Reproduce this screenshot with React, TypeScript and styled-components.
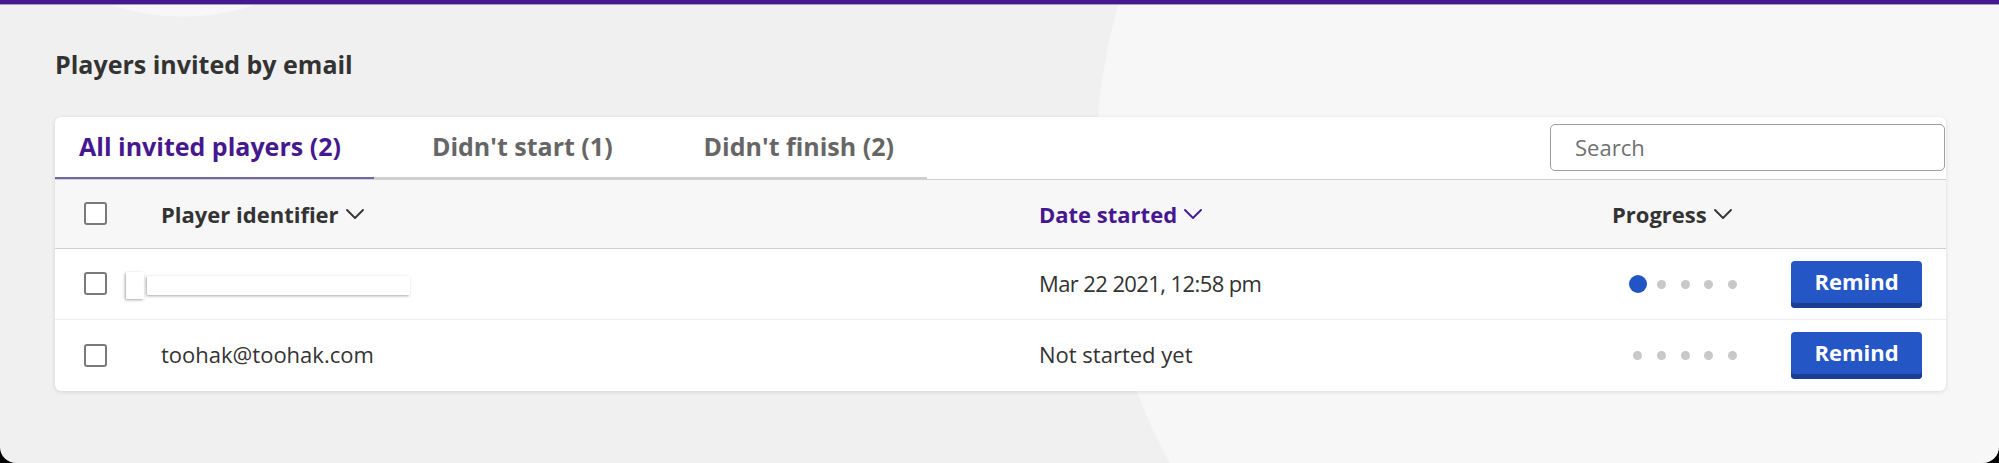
import React from "react";
import styled, { createGlobalStyle } from "styled-components";

const GlobalStyle = createGlobalStyle`
  html, body { margin: 0; padding: 0; background: #000; }
  body { font-family: "Open Sans", "Noto Sans", sans-serif; }
  *, *::before, *::after { box-sizing: border-box; }
`;

const Page = styled.div`
  width: 1999px;
  height: 463px;
  overflow: hidden;
  border-radius: 0 0 16px 16px;
  background:
    radial-gradient(circle 227px at 183px -210px, #f7f7f7 99.6%, rgba(247, 247, 247, 0) 100%),
    radial-gradient(circle 615px at 1710px 170px, #f7f7f7 99.8%, rgba(247, 247, 247, 0) 100%),
    #f0f0f0;
  display: flex;
  flex-direction: column;
`;

const TopBar = styled.div`
  height: 5px;
  background: #46178f;
  border-bottom: 1px solid #a49bc8;
`;

const Content = styled.main`
  padding: 42px 53px 0 55px;
`;

const Heading = styled.h2`
  margin: 0;
  font-size: 25px;
  font-weight: 700;
  line-height: 34px;
  color: #333;
`;

const Card = styled.section`
  margin-top: 36px;
  background: #fff;
  border-radius: 6px;
  box-shadow: 0 1px 4px rgba(0, 0, 0, 0.12);
  overflow: hidden;
`;

const TabBar = styled.div`
  display: flex;
  align-items: flex-start;
  height: 62px;
`;

const Tab = styled.button<{ $active?: boolean; $first?: boolean }>`
  height: 62px;
  margin: 0;
  padding: 12px 33px 0 ${(p) => (p.$first ? "24px" : "58px")};
  border: none;
  border-bottom: 2px solid ${(p) => (p.$active ? "#6f66aa" : "#cfcfcf")};
  background: transparent;
  font-family: inherit;
  font-size: 25px;
  font-weight: 700;
  line-height: 34px;
  text-align: left;
  color: ${(p) => (p.$active ? "#46178f" : "#666")};
  display: flex;
  align-items: flex-start;
  white-space: nowrap;
`;

const Search = styled.input`
  margin: 7px 1px 0 auto;
  width: 395px;
  height: 47px;
  border: 1px solid #9e9e9e;
  border-radius: 5px;
  padding: 0 0 2px 24px;
  font-family: inherit;
  font-size: 22px;
  color: #333;
  background: #fff;
  outline: none;
  &::placeholder { color: #707070; }
`;

const gridCols = "106px 878px 573px 179px 131px";

const HeaderRow = styled.div`
  display: grid;
  grid-template-columns: ${gridCols};
  padding-right: 24px;
  align-items: center;
  height: 70px;
  background: #f7f7f7;
  border-top: 1px solid #cfcfcf;
  border-bottom: 1px solid #cfcfcf;
`;

const Row = styled.div<{ $last?: boolean }>`
  display: grid;
  grid-template-columns: ${gridCols};
  padding-right: 24px;
  align-items: center;
  height: 71px;
  border-bottom: ${(p) => (p.$last ? "none" : "1px solid #eeeeee")};
`;

const Checkbox = styled.span`
  display: block;
  width: 23px;
  height: 23px;
  margin-left: 29px;
  margin-bottom: 1px;
  border: 2px solid #7a7a7a;
  border-radius: 3px;
  background: #fff;
`;

const HeaderLabel = styled.span<{ $color?: string }>`
  display: inline-flex;
  align-items: center;
  gap: 7px;
  font-size: 22px;
  font-weight: 700;
  line-height: 30px;
  color: ${(p) => p.$color || "#333"};
  white-space: nowrap;
`;

const Cell = styled.div<{ $tight?: boolean }>`
  display: flex;
  align-items: center;
  padding-bottom: 3px;
  font-size: 22px;
  line-height: 30px;
  color: #333;
  white-space: nowrap;
  letter-spacing: ${(p) => (p.$tight ? "-0.6px" : "0")};
`;

const Redacted = styled.div`
  display: flex;
  align-items: center;
  gap: 3px;
  margin-left: -35px;
  margin-top: 5px;
`;

const RedactBlock = styled.span<{ $w: number; $h: number }>`
  display: block;
  width: ${(p) => p.$w}px;
  height: ${(p) => p.$h}px;
  background: #fff;
  border-radius: 1px;
  box-shadow: -1px 1px 3px rgba(0, 0, 0, 0.35);
`;

const Dots = styled.div`
  display: flex;
  align-items: center;
  margin-left: 14px;
`;

const DotSlot = styled.span`
  width: 23.7px;
  height: 18px;
  display: flex;
  align-items: center;
  justify-content: center;
`;

const Dot = styled.span<{ $active?: boolean }>`
  display: block;
  width: ${(p) => (p.$active ? 18 : 9)}px;
  height: ${(p) => (p.$active ? 18 : 9)}px;
  border-radius: 50%;
  background: ${(p) => (p.$active ? "#2354c4" : "#c8c8c8")};
`;

const RemindButton = styled.button`
  width: 131px;
  height: 47px;
  margin: 0;
  padding: 0 0 7px;
  border: none;
  border-radius: 4px;
  background: #2556c6;
  box-shadow: inset 0 -5px 0 #193e93;
  color: #fff;
  font-family: inherit;
  font-size: 22px;
  font-weight: 700;
  line-height: 30px;
  cursor: pointer;
`;

const Chevron = () => (
  <svg width="18" height="10" viewBox="0 0 18 10" fill="none">
    <polyline points="1,1 9,9 17,1" stroke="currentColor" strokeWidth="1.8" strokeLinejoin="round" strokeLinecap="round" />
  </svg>
);

const Progress = ({ done }: { done: number }) => (
  <Dots>
    {[0, 1, 2, 3, 4].map((i) => (
      <DotSlot key={i}>
        <Dot $active={i < done} />
      </DotSlot>
    ))}
  </Dots>
);

export default function App() {
  return (
    <>
      <GlobalStyle />
      <Page>
        <TopBar />
        <Content>
          <Heading>Players invited by email</Heading>
          <Card>
            <TabBar>
              <Tab $active $first>All invited players (2)</Tab>
              <Tab>Didn't start (1)</Tab>
              <Tab>Didn't finish (2)</Tab>
              <Search placeholder="Search" />
            </TabBar>
            <HeaderRow>
              <Checkbox />
              <HeaderLabel>
                Player identifier <Chevron />
              </HeaderLabel>
              <HeaderLabel $color="#46178f">
                Date started <Chevron />
              </HeaderLabel>
              <HeaderLabel>
                Progress <Chevron />
              </HeaderLabel>
              <span />
            </HeaderRow>
            <Row>
              <Checkbox />
              <Cell>
                <Redacted>
                  <RedactBlock $w={18} $h={27} />
                  <RedactBlock $w={263} $h={19} />
                </Redacted>
              </Cell>
              <Cell $tight>Mar 22 2021, 12:58 pm</Cell>
              <Progress done={1} />
              <RemindButton>Remind</RemindButton>
            </Row>
            <Row $last>
              <Checkbox />
              <Cell>toohak@toohak.com</Cell>
              <Cell>Not started yet</Cell>
              <Progress done={0} />
              <RemindButton>Remind</RemindButton>
            </Row>
          </Card>
        </Content>
      </Page>
    </>
  );
}
